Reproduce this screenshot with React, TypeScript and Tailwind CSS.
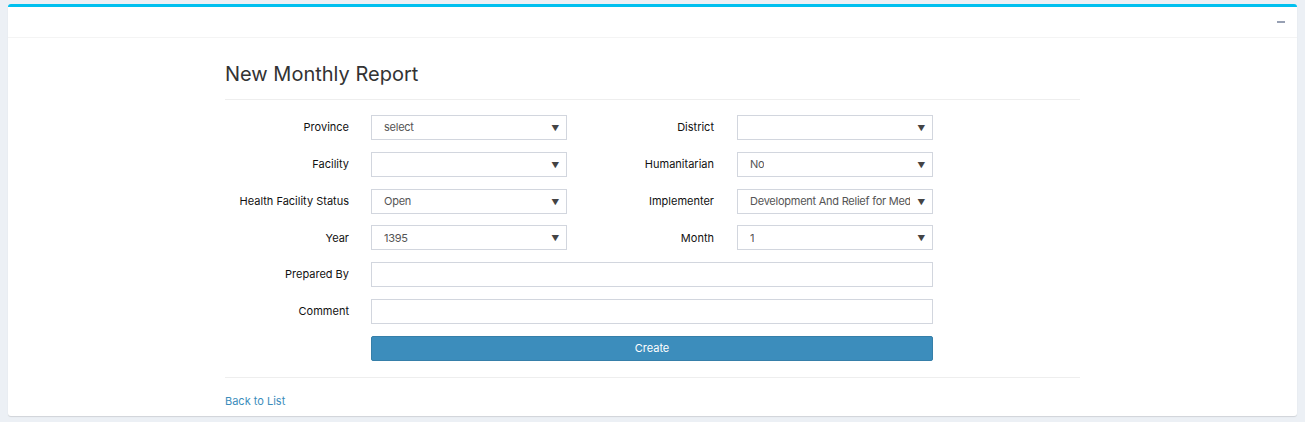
import React from 'react';

const font = { fontFamily: '"Inter", "Noto Sans", sans-serif' };

const Select = ({ value }: { value?: string }) => (
  <div className="relative flex h-[25px] w-[196px] items-center border border-[#d2d6de] bg-white pl-[12px] pr-[22px] text-[11px] tracking-[-0.25px] text-[#555]">
    <span className="overflow-hidden whitespace-nowrap">{value}</span>
    <span className="absolute right-[7px] top-[6px] text-[8px] text-[#444]">▼</span>
  </div>
);

const Label = ({ children, w }: { children: React.ReactNode; w: string }) => (
  <div className={`${w} text-right text-[11px] text-[#111]`}>{children}</div>
);

const rows: [string, string | undefined, string, string | undefined][] = [
  ['Province', 'select', 'District', undefined],
  ['Facility', undefined, 'Humanitarian', 'No'],
  ['Health Facility Status', 'Open', 'Implementer', 'Development And Relief for Med'],
  ['Year', '1395', 'Month', '1'],
];

export default function App() {
  return (
    <div className="min-h-[422px] bg-[#ecf0f5] px-[8px] pt-[4px]" style={font}>
      <div className="rounded-[3px] border-t-[3px] border-[#00c0ef] bg-white shadow-[0_1px_1px_rgba(0,0,0,0.12)]">
        <div className="flex h-[31px] items-center justify-end border-b border-[#f4f4f4] pr-[12px]">
          <span className="h-[2px] w-[8px] bg-[#97a0b3]" />
        </div>
        <div className="mx-auto w-[855px] pb-[7px]">
          <h2 className="pt-[24px] text-[20px] leading-[24px] text-[#333]">New Monthly Report</h2>
          <div className="mt-[13px] border-t border-[#eee]" />
          <div className="flex flex-col gap-[11.8px] pt-[15px]">
            {rows.map(([l1, v1, l2, v2]) => (
              <div key={l1} className="flex items-center">
                <Label w="w-[124px]">{l1}</Label>
                <div className="ml-[22px]">
                  <Select value={v1} />
                </div>
                <Label w="w-[147px]">{l2}</Label>
                <div className="ml-[23px]">
                  <Select value={v2} />
                </div>
              </div>
            ))}
            {['Prepared By', 'Comment'].map((l) => (
              <div key={l} className="flex items-center">
                <Label w="w-[124px]">{l}</Label>
                <div className="ml-[22px] h-[25px] w-[562px] border border-[#d2d6de] bg-white" />
              </div>
            ))}
            <div className="flex">
              <button className="ml-[146px] h-[25px] w-[562px] rounded-[2px] border border-[#367fa9] bg-[#3c8dbc] text-[11px] text-white">
                Create
              </button>
            </div>
          </div>
          <div className="mt-[16px] border-t border-[#eee]" />
          <a className="mt-[15px] block text-[11px] text-[#3c8dbc]">Back to List</a>
        </div>
      </div>
    </div>
  );
}
